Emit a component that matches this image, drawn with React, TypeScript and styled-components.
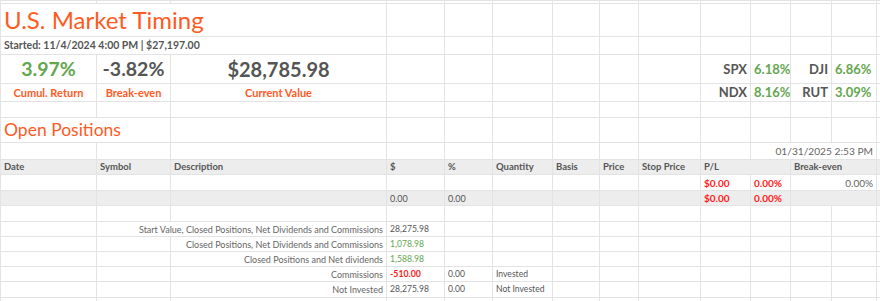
import React from 'react';
import styled, { createGlobalStyle } from 'styled-components';

const GlobalStyle = createGlobalStyle`
	html, body {
		margin: 0;
		padding: 0;
		background: #ffffff;
		overflow: hidden;
	}
	body {
		font-family: Lato, 'Open Sans', sans-serif;
	}
`;

type Tone = 'orange' | 'green' | 'red' | 'ink' | 'muted';
type Align = 'left' | 'center' | 'right';

const tones: Record<Tone, string> = {
	orange: '#ff5a1f',
	green: '#63a64f',
	red: '#ff1a1a',
	ink: '#555555',
	muted: '#666666',
};

const justify: Record<Align, string> = {
	left: 'flex-start',
	center: 'center',
	right: 'flex-end',
};

// column widths and row heights, read off the sheet
const COLS = [96, 74, 216, 58, 48, 60, 47, 39, 62, 50, 40, 41, 45, 40];
const ROWS = [3, 33, 18, 29, 18, 16, 25, 17, 15, 16, 15, 16, 15, 15, 15, 15, 16, 12];
const SHADED_ROWS = [8, 10];

const Sheet = styled.div`
	display: grid;
	grid-template-columns: ${COLS.map(w => `${w}px`).join(' ')};
	grid-template-rows: ${ROWS.map(h => `${h}px`).join(' ')};
	width: 880px;
	height: 301px;
	overflow: hidden;
`;

const Cell = styled.div<{
	$align: Align;
	$tone: Tone;
	$bold: boolean;
	$size: number;
	$shaded: boolean;
}>`
	box-sizing: border-box;
	display: flex;
	align-items: center;
	justify-content: ${p => justify[p.$align]};
	padding: 0 3px;
	border-left: 1px solid #e3e3e3;
	border-top: 1px solid #e3e3e3;
	background: ${p => (p.$shaded ? '#ededed' : '#ffffff')};
	color: ${p => tones[p.$tone]};
	font-size: ${p => p.$size}px;
	font-weight: ${p => (p.$bold ? 700 : 400)};
	line-height: 1;
	white-space: nowrap;
`;

type Entry = {
	row: number;
	col: number;
	span?: number;
	text: string;
	align?: Align;
	tone?: Tone;
	bold?: boolean;
	size?: number;
};

const entries: Entry[] = [
	{ row: 1, col: 0, span: 3, text: 'U.S. Market Timing', tone: 'orange', size: 24 },
	{ row: 2, col: 0, span: 3, text: 'Started: 11/4/2024 4:00 PM | $27,197.00', bold: true, size: 10.5 },

	{ row: 3, col: 0, text: '3.97%', align: 'center', tone: 'green', bold: true, size: 19.5 },
	{ row: 3, col: 1, text: '-3.82%', align: 'center', bold: true, size: 19.5 },
	{ row: 3, col: 2, text: '$28,785.98', align: 'center', bold: true, size: 20 },
	{ row: 3, col: 9, text: 'SPX', align: 'right', bold: true, size: 13 },
	{ row: 3, col: 10, text: '6.18%', tone: 'green', bold: true, size: 13 },
	{ row: 3, col: 11, text: 'DJI', align: 'right', bold: true, size: 13 },
	{ row: 3, col: 12, text: '6.86%', tone: 'green', bold: true, size: 13 },

	{ row: 4, col: 0, text: 'Cumul. Return', align: 'center', tone: 'orange', bold: true, size: 11 },
	{ row: 4, col: 1, text: 'Break-even', align: 'center', tone: 'orange', bold: true, size: 11 },
	{ row: 4, col: 2, text: 'Current Value', align: 'center', tone: 'orange', bold: true, size: 11 },
	{ row: 4, col: 9, text: 'NDX', align: 'right', bold: true, size: 13 },
	{ row: 4, col: 10, text: '8.16%', tone: 'green', bold: true, size: 13 },
	{ row: 4, col: 11, text: 'RUT', align: 'right', bold: true, size: 13 },
	{ row: 4, col: 12, text: '3.09%', tone: 'green', bold: true, size: 13 },

	{ row: 6, col: 0, span: 2, text: 'Open Positions', tone: 'orange', size: 17.5 },
	{ row: 7, col: 10, span: 3, text: '01/31/2025 2:53 PM', align: 'right', tone: 'muted', size: 10.2 },

	{ row: 8, col: 0, text: 'Date', bold: true, size: 9.5 },
	{ row: 8, col: 1, text: 'Symbol', bold: true, size: 9.5 },
	{ row: 8, col: 2, text: 'Description', bold: true, size: 9.5 },
	{ row: 8, col: 3, text: '$', bold: true, size: 9.5 },
	{ row: 8, col: 4, text: '%', bold: true, size: 9.5 },
	{ row: 8, col: 5, text: 'Quantity', bold: true, size: 9.5 },
	{ row: 8, col: 6, text: 'Basis', bold: true, size: 9.5 },
	{ row: 8, col: 7, text: 'Price', bold: true, size: 9.5 },
	{ row: 8, col: 8, text: 'Stop Price', bold: true, size: 9.5 },
	{ row: 8, col: 9, span: 2, text: 'P/L', bold: true, size: 9.5 },
	{ row: 8, col: 11, span: 2, text: 'Break-even', bold: true, size: 9.5 },

	{ row: 9, col: 9, text: '$0.00', tone: 'red', bold: true },
	{ row: 9, col: 10, text: '0.00%', tone: 'red', bold: true },
	{ row: 9, col: 11, span: 2, text: '0.00%', align: 'right', tone: 'muted' },

	{ row: 10, col: 3, text: '0.00', size: 9 },
	{ row: 10, col: 4, text: '0.00', size: 9 },
	{ row: 10, col: 9, text: '$0.00', tone: 'red', bold: true },
	{ row: 10, col: 10, text: '0.00%', tone: 'red', bold: true },
	{ row: 10, col: 11, span: 2, text: '' },

	{ row: 12, col: 1, span: 2, text: 'Start Value, Closed Positions, Net Dividends and Commissions', align: 'right', tone: 'muted', size: 9 },
	{ row: 12, col: 3, text: '28,275.98', size: 8.6 },
	{ row: 13, col: 2, text: 'Closed Positions, Net Dividends and Commissions', align: 'right', tone: 'muted', size: 9 },
	{ row: 13, col: 3, text: '1,078.98', tone: 'green', size: 8.6 },
	{ row: 14, col: 2, text: 'Closed Positions and Net dividends', align: 'right', tone: 'muted', size: 9 },
	{ row: 14, col: 3, text: '1,588.98', tone: 'green', size: 8.6 },
	{ row: 15, col: 2, text: 'Commissions', align: 'right', tone: 'muted', size: 9 },
	{ row: 15, col: 3, text: '-510.00', tone: 'red', bold: true, size: 8.8 },
	{ row: 15, col: 4, text: '0.00', size: 8.6 },
	{ row: 15, col: 5, text: 'Invested', size: 8.6 },
	{ row: 16, col: 2, text: 'Not Invested', align: 'right', tone: 'muted', size: 9 },
	{ row: 16, col: 3, text: '28,275.98', size: 8.6 },
	{ row: 16, col: 4, text: '0.00', size: 8.6 },
	{ row: 16, col: 5, text: 'Not Invested', size: 8.6 },
];

function buildRow(row: number) {
	const cells: React.ReactNode[] = [];
	const shaded = SHADED_ROWS.includes(row);
	let col = 0;
	while (col < COLS.length) {
		const entry = entries.find(e => e.row === row && e.col === col);
		const span = entry?.span ?? 1;
		cells.push(
			<Cell
				key={`${row}-${col}`}
				style={{ gridRow: row + 1, gridColumn: `${col + 1} / span ${span}` }}
				$align={entry?.align ?? 'left'}
				$tone={entry?.tone ?? 'ink'}
				$bold={entry?.bold ?? false}
				$size={entry?.size ?? 10}
				$shaded={shaded}
			>
				{entry?.text}
			</Cell>,
		);
		col += span;
	}
	return cells;
}

export default function App() {
	return (
		<>
			<GlobalStyle />
			<Sheet>{ROWS.map((_, row) => buildRow(row))}</Sheet>
		</>
	);
}
